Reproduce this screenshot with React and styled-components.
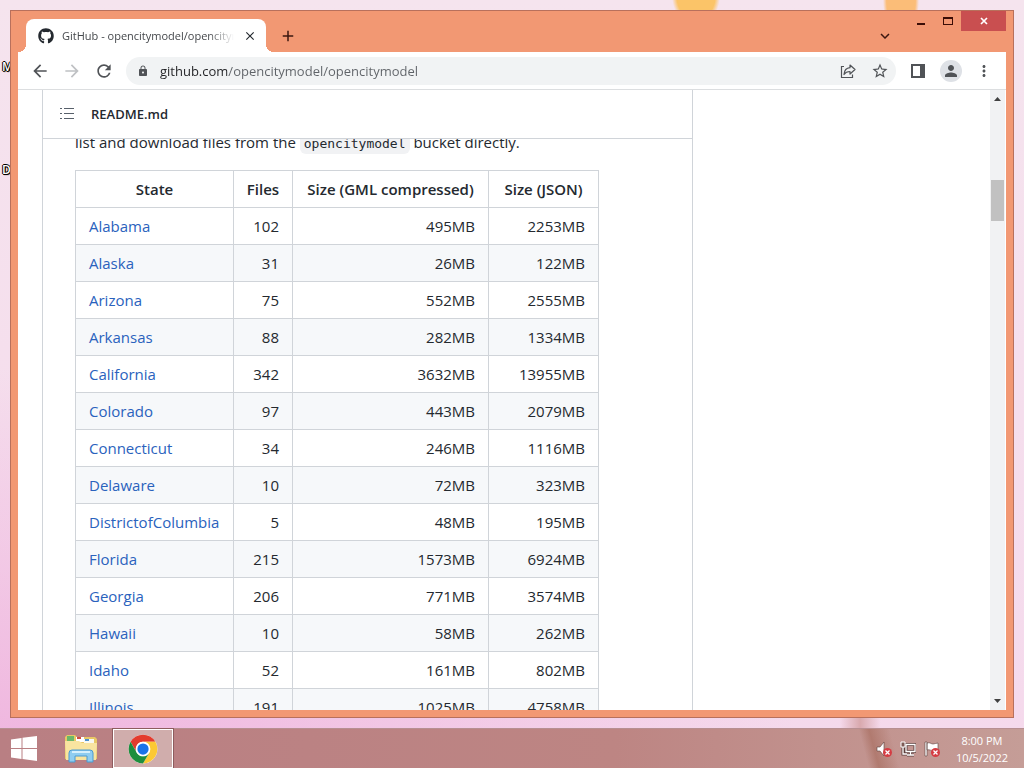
import React from 'react';
import styled, { createGlobalStyle } from 'styled-components';
import {
  MdArrowBack,
  MdArrowForward,
  MdRefresh,
  MdLock,
  MdStarBorder,
  MdPerson,
  MdMoreVert,
  MdKeyboardArrowDown,
  MdAdd,
  MdClose,
} from 'react-icons/md';
import { FaGithub } from 'react-icons/fa';

const GlobalStyle = createGlobalStyle`
  * {
    box-sizing: border-box;
  }

  body {
    margin: 0;
    font-family: 'Open Sans', 'Noto Sans', sans-serif;
  }

  button {
    padding: 0;
    border: 0;
    background: none;
    font: inherit;
    color: inherit;
  }
`;

const Desktop = styled.div`
  position: relative;
  display: flex;
  flex-direction: column;
  height: 100vh;
  overflow: hidden;
  background:
    radial-gradient(ellipse 24px 30px at 696px -4px, #fbc468 80%, transparent),
    radial-gradient(ellipse 18px 40px at 901px 0, #fbbd78 80%, transparent),
    linear-gradient(90deg, transparent 82%, #d9a9ae 84%, transparent 86%) bottom / 100% 50px no-repeat,
    radial-gradient(ellipse 800px 400px at 0 100%, #efb4de, transparent),
    linear-gradient(#f5e4ee, #f5d9ec);
`;

const ShortcutLabel = styled.span`
  position: absolute;
  left: 2px;
  top: ${props => props.$top}px;
  font-size: 12px;
  font-weight: 600;
  line-height: 14px;
  color: #fff;
  text-shadow: 1px 0 #000, -1px 0 #000, 0 1px #000, 0 -1px #000, 1px 1px 1px #000;
`;

const WindowArea = styled.main`
  position: relative;
  display: flex;
  flex: 1;
  min-height: 0;
  padding: 10px;
`;

const Window = styled.section`
  display: flex;
  flex-direction: column;
  flex: 1;
  min-width: 0;
  padding: 0 7px 7px;
  border: 1px solid #b8705c;
  background: #f29873;
`;

const TitleBar = styled.header`
  display: flex;
  flex: none;
  height: 41px;
  padding-left: 8px;
  color: #3c1710;
`;

const Tab = styled.div`
  position: relative;
  display: flex;
  align-items: center;
  align-self: flex-end;
  width: 240px;
  height: 33px;
  padding: 0 8px 0 12px;
  border-radius: 8px 8px 0 0;
  background: #fff;
  color: #24292f;

  &::before,
  &::after {
    content: '';
    position: absolute;
    bottom: 0;
    width: 8px;
    height: 8px;
  }

  &::before {
    right: 100%;
    background: radial-gradient(circle at 0 0, transparent 8px, #fff 8px);
  }

  &::after {
    left: 100%;
    background: radial-gradient(circle at 100% 0, transparent 8px, #fff 8px);
  }
`;

const TabTitle = styled.span`
  flex: 1;
  margin: 0 8px;
  overflow: hidden;
  font-size: 11px;
  white-space: nowrap;
  color: #45484c;
  mask-image: linear-gradient(90deg, #000 85%, transparent);
`;

const IconButton = styled.button`
  display: flex;
  align-items: center;
  justify-content: center;
  flex: none;
  width: ${props => props.$size || 20}px;
  height: ${props => props.$size || 20}px;
  border-radius: 50%;
  background: ${props => props.$background || 'none'};
  color: ${props => props.$color || 'inherit'};
`;

const NewTab = styled(IconButton)`
  margin: 15px 0 0 12px;
`;

const TabSearch = styled(IconButton)`
  margin: 15px 12px 0 auto;
`;

const WindowControls = styled.div`
  display: flex;
  height: 20px;
`;

const WindowControl = styled.button`
  display: flex;
  align-items: center;
  justify-content: center;
  width: ${props => (props.$close ? 45 : 27)}px;
  background: ${props => (props.$close ? '#c94f50' : 'none')};
  color: ${props => (props.$close ? '#fff' : '#3c0d06')};
`;

const Toolbar = styled.nav`
  display: flex;
  align-items: center;
  flex: none;
  gap: 12px;
  height: 38px;
  padding: 0 12px;
  border-bottom: 1px solid #dcdee0;
  background: #fff;
  color: #505357;
`;

const AddressBar = styled.label`
  display: flex;
  align-items: center;
  flex: 1;
  gap: 11px;
  height: 28px;
  padding: 0 6px 0 11px;
  border-radius: 14px;
  background: #f1f3f4;
`;

const Address = styled.input`
  flex: 1;
  min-width: 0;
  padding: 0;
  border: 0;
  outline: 0;
  background: linear-gradient(90deg, #202124 67px, #5f6368 67px);
  background-clip: text;
  -webkit-text-fill-color: transparent;
  font: 13px 'Open Sans', 'Noto Sans', sans-serif;
`;

const Actions = styled.div`
  display: flex;
  align-items: center;
  gap: 12px;
`;

const Viewport = styled.div`
  display: flex;
  flex: 1;
  min-height: 0;
  background: #fff;
`;

const Page = styled.div`
  flex: 1;
  min-width: 0;
  padding-left: 24px;
  overflow: hidden;
`;

const Readme = styled.article`
  display: flex;
  flex-direction: column;
  max-width: 651px;
  height: 100%;
  border: solid #d0d4d9;
  border-width: 0 1px;
  color: #24292f;
`;

const ReadmeHeader = styled.header`
  display: flex;
  align-items: center;
  flex: none;
  gap: 16px;
  height: 49px;
  padding: 0 16px;
  border-bottom: 1px solid #d0d4d9;
  color: #57606a;
`;

const ReadmeTitle = styled.h2`
  margin: 0;
  font-size: 13px;
  font-weight: 600;
  color: #24292f;
`;

const ReadmeBody = styled.div`
  flex: 1;
  min-height: 0;
  padding: 0 32px;
  overflow: hidden;
  font-size: 15px;
  line-height: 24px;
`;

/* Scrolled partly under the sticky header */
const Paragraph = styled.p`
  margin: -9px 0 16px;
  white-space: nowrap;
`;

const Code = styled.code`
  padding: 3px 4px;
  border-radius: 6px;
  background: #f1f2f4;
  font: 13px 'DejaVu Sans Mono', monospace;
`;

const Table = styled.table`
  border-collapse: collapse;
  table-layout: fixed;
  width: 524px;
`;

const Col = styled.col`
  width: ${props => props.$width}px;
`;

const Row = styled.tr`
  height: 37px;
  background: #fff;

  tbody &:nth-child(even) {
    background: #f6f8fa;
  }
`;

const HeadCell = styled.th`
  padding: 6px 0;
  border: 1px solid #d0d4d9;
  font-weight: 600;
  white-space: nowrap;
`;

const Cell = styled.td`
  padding: 6px 13px;
  border: 1px solid #d0d4d9;
  text-align: ${props => props.$align || 'right'};
`;

const StateLink = styled.a`
  color: #2a62bd;
  text-decoration: none;
`;

const Scrollbar = styled.div`
  display: flex;
  flex-direction: column;
  align-items: center;
  flex: none;
  width: 15px;
  margin-right: 1px;
  padding: 7px 0;
  background: #f1f2f3;
  color: #404040;
`;

const ScrollTrack = styled.div`
  display: flex;
  flex: 1;
  flex-direction: column;
  width: 13px;

  &::before {
    content: '';
    flex: 79;
  }

  &::after {
    content: '';
    flex: 478;
  }
`;

const ScrollThumb = styled.div`
  flex: 41;
  background: #c1c1c1;
`;

const Taskbar = styled.footer`
  position: relative;
  display: flex;
  flex: none;
  height: 40px;
  border-top: 1px solid #b78f92;
  background:
    linear-gradient(75deg, transparent 84%, rgba(165, 105, 90, 0.6) 85%, transparent 87%),
    linear-gradient(90deg, #b97f83, #bd8583 60%, #c59d97);
`;

const TaskButton = styled.button`
  display: flex;
  align-items: center;
  justify-content: center;
  width: ${props => props.$width}px;
  border: ${props => (props.$active ? '1px solid #fff' : '0')};
  outline: ${props => (props.$active ? '1px solid #8d5c5e' : '0')};
  background: ${props => (props.$active ? '#d0adac' : 'none')};
`;

const Tray = styled.div`
  display: flex;
  align-items: center;
  gap: 8px;
  margin-left: auto;
  padding-right: 16px;
`;

const Clock = styled.time`
  margin-left: 8px;
  font-size: 11px;
  line-height: 17px;
  text-align: center;
  color: #fff;
`;

const states = [
  { name: 'Alabama', files: 102, gml: '495MB', json: '2253MB' },
  { name: 'Alaska', files: 31, gml: '26MB', json: '122MB' },
  { name: 'Arizona', files: 75, gml: '552MB', json: '2555MB' },
  { name: 'Arkansas', files: 88, gml: '282MB', json: '1334MB' },
  { name: 'California', files: 342, gml: '3632MB', json: '13955MB' },
  { name: 'Colorado', files: 97, gml: '443MB', json: '2079MB' },
  { name: 'Connecticut', files: 34, gml: '246MB', json: '1116MB' },
  { name: 'Delaware', files: 10, gml: '72MB', json: '323MB' },
  { name: 'DistrictofColumbia', files: 5, gml: '48MB', json: '195MB' },
  { name: 'Florida', files: 215, gml: '1573MB', json: '6924MB' },
  { name: 'Georgia', files: 206, gml: '771MB', json: '3574MB' },
  { name: 'Hawaii', files: 10, gml: '58MB', json: '262MB' },
  { name: 'Idaho', files: 52, gml: '161MB', json: '802MB' },
  { name: 'Illinois', files: 191, gml: '1025MB', json: '4758MB' },
];

function ListIcon() {
  return (
    <svg width="16" height="16" viewBox="0 0 16 16" fill="currentColor">
      <path d="M5 2h10v1H5zM5 7h10v1H5zM5 12h10v1H5z" />
      <path d="M1 2h2v1H1zM1 7h2v1H1zM1 12h2v1H1z" />
    </svg>
  );
}

function ShareIcon() {
  return (
    <svg width="16" height="16" viewBox="0 0 16 16" fill="none" stroke="currentColor" strokeWidth="1.2">
      <path d="M4 3.500H1.500v11h11v-3" />
      <path d="M10 2l5 4.500-5 4.500V8.500C7 8.500 5.300 9.500 4 11.500 4.300 7.500 6.500 5 10 4.700z" strokeLinejoin="round" />
    </svg>
  );
}

function SidePanelIcon() {
  return (
    <svg width="16" height="16" viewBox="0 0 16 16">
      <path d="M2 2h12v12H2z" fill="none" stroke="currentColor" strokeWidth="2" />
      <path d="M10 2h4v12h-4z" fill="currentColor" />
    </svg>
  );
}

function WindowsIcon() {
  return (
    <svg width="28" height="26" viewBox="0 0 28 26" fill="#fff">
      <path d="M1 3.500l10.500-1.500v10H1zM12.500 1.800L27 0v12H12.500zM1 13h10.500v10L1 21.500zM12.500 13H27v12l-14.500-1.900z" />
    </svg>
  );
}

function FolderIcon() {
  return (
    <svg width="34" height="30" viewBox="0 0 34 30">
      <path d="M1 3l2-2h8l2 2h18l2 2v20H1z" fill="#e8c766" />
      <path d="M3 2h7v5H3z" fill="#6bb86a" />
      <path d="M12 3h8v5h-8z" fill="#fff" />
      <path d="M13 3h4v2h-4z" fill="#cf4f42" />
      <path d="M20 5h10v4H20z" fill="#f8f8f0" />
      <path d="M21 5h4v2h-4z" fill="#4b90cf" />
      <path d="M1 7h14l3 2h15l-1 17H2z" fill="#f8e4a0" />
      <path d="M5 28V19q0-3 3-3h18q3 0 3 3v9h-6v-6H11v6z" fill="#8fcdf0" stroke="#4b9ad0" />
      <path d="M8 18h18" stroke="#d6f0fc" strokeWidth="2" />
    </svg>
  );
}

function ChromeIcon() {
  return (
    <svg width="30" height="30" viewBox="0 0 48 48">
      <circle cx="24" cy="24" r="23" fill="#fff" />
      <path d="M4.100 12.500A23 23 0 0 1 43.900 12.500H24A11.500 11.500 0 0 0 14 29.800z" fill="#e33b2e" />
      <path d="M43.900 12.500A23 23 0 0 1 24 47L34 29.800A11.500 11.500 0 0 0 24 12.500z" fill="#fcc934" />
      <path d="M24 47A23 23 0 0 1 4.100 12.500L14 29.800A11.500 11.500 0 0 0 34 29.800z" fill="#1e8e3e" />
      <circle cx="24" cy="24" r="11.500" fill="#fff" />
      <circle cx="24" cy="24" r="9" fill="#1a73e8" />
    </svg>
  );
}

function ErrorBadge() {
  return (
    <g>
      <circle cx="11.500" cy="11.500" r="4.500" fill="#d53c43" />
      <path d="M9.500 9.500l4 4M13.500 9.500l-4 4" stroke="#fff" strokeWidth="1.300" />
    </g>
  );
}

function VolumeIcon() {
  return (
    <svg width="16" height="16" viewBox="0 0 16 16">
      <path d="M1 6h3l4-5v14l-4-5H1z" fill="#fff" stroke="#5d3f3c" strokeWidth=".6" />
      <ErrorBadge />
    </svg>
  );
}

function NetworkIcon() {
  return (
    <svg width="16" height="16" viewBox="0 0 16 16" fill="none">
      <path d="M6 3.500h9v7H6zM10.500 10.500v3M7 14h7M3 6v7h4" stroke="#5d3f3c" strokeWidth="3" />
      <path d="M6 3.500h9v7H6zM10.500 10.500v3M7 14h7M3 6v7h4" stroke="#fff" strokeWidth="1.300" />
      <path d="M1 1h4v5H1z" fill="#7d5a55" stroke="#fff" />
    </svg>
  );
}

function FlagIcon() {
  return (
    <svg width="16" height="16" viewBox="0 0 16 16">
      <path d="M1 1h2v14H1zM3 2c3-1 4 1 6 1s3-1 5-1v7c-3 0-3 1-5 1S6 8 3 9z" fill="#fff" stroke="#5d3f3c" strokeWidth=".6" />
      <ErrorBadge />
    </svg>
  );
}

function BrowserTitleBar() {
  return (
    <TitleBar>
      <Tab>
        <FaGithub size={16} />
        <TabTitle>GitHub - opencitymodel/opencitymodel</TabTitle>
        <IconButton $size={16} aria-label="Close tab"><MdClose size={14} /></IconButton>
      </Tab>
      <NewTab aria-label="New tab"><MdAdd size={18} /></NewTab>
      <TabSearch aria-label="Search tabs"><MdKeyboardArrowDown size={18} /></TabSearch>
      <WindowControls>
        <WindowControl aria-label="Minimize">
          <svg width="10" height="10"><path d="M1 7h8v2H1z" fill="currentColor" /></svg>
        </WindowControl>
        <WindowControl aria-label="Maximize">
          <svg width="10" height="10"><path d="M0 1h10v8H0zM1 3v5h8V3z" fill="currentColor" fillRule="evenodd" /></svg>
        </WindowControl>
        <WindowControl $close aria-label="Close">
          <svg width="8" height="8"><path d="M1 1l6 6M7 1L1 7" stroke="currentColor" strokeWidth="1.700" /></svg>
        </WindowControl>
      </WindowControls>
    </TitleBar>
  );
}

function BrowserToolbar() {
  return (
    <Toolbar>
      <IconButton aria-label="Back"><MdArrowBack size={20} /></IconButton>
      <IconButton $color="#bfc1c4" aria-label="Forward"><MdArrowForward size={20} /></IconButton>
      <IconButton aria-label="Reload"><MdRefresh size={20} /></IconButton>
      <AddressBar>
        <MdLock size={12} />
        <Address aria-label="Address" defaultValue="github.com/opencitymodel/opencitymodel" />
        <Actions>
          <IconButton aria-label="Share"><ShareIcon /></IconButton>
          <IconButton aria-label="Bookmark"><MdStarBorder size={18} /></IconButton>
        </Actions>
      </AddressBar>
      <Actions>
        <IconButton aria-label="Side panel"><SidePanelIcon /></IconButton>
        <IconButton $size={22} $background="#dee1e6" aria-label="Profile"><MdPerson size={18} /></IconButton>
        <IconButton aria-label="Menu"><MdMoreVert size={18} /></IconButton>
      </Actions>
    </Toolbar>
  );
}

function StatesTable() {
  return (
    <Table>
      <colgroup>
        <Col $width={158} />
        <Col $width={59} />
        <Col $width={196} />
        <Col $width={110} />
      </colgroup>
      <thead>
        <Row>
          <HeadCell>State</HeadCell>
          <HeadCell>Files</HeadCell>
          <HeadCell>Size (GML compressed)</HeadCell>
          <HeadCell>Size (JSON)</HeadCell>
        </Row>
      </thead>
      <tbody>
        {states.map(state => (
          <Row key={state.name}>
            <Cell $align="left"><StateLink href={`#${state.name}`}>{state.name}</StateLink></Cell>
            <Cell>{state.files}</Cell>
            <Cell>{state.gml}</Cell>
            <Cell>{state.json}</Cell>
          </Row>
        ))}
      </tbody>
    </Table>
  );
}

function App() {
  return (
    <Desktop>
      <GlobalStyle />
      <ShortcutLabel $top={60}>M</ShortcutLabel>
      <ShortcutLabel $top={163}>D</ShortcutLabel>

      <WindowArea>
        <Window>
          <BrowserTitleBar />
          <BrowserToolbar />
          <Viewport>
            <Page>
              <Readme>
                <ReadmeHeader>
                  <ListIcon />
                  <ReadmeTitle>README.md</ReadmeTitle>
                </ReadmeHeader>
                <ReadmeBody>
                  <Paragraph>
                    list and download files from the <Code>opencitymodel</Code> bucket directly.
                  </Paragraph>
                  <StatesTable />
                </ReadmeBody>
              </Readme>
            </Page>
            <Scrollbar>
              <svg width="7" height="4"><path d="M0 4l3.500-4L7 4z" fill="currentColor" /></svg>
              <ScrollTrack><ScrollThumb /></ScrollTrack>
              <svg width="7" height="4"><path d="M0 0l3.500 4L7 0z" fill="currentColor" /></svg>
            </Scrollbar>
          </Viewport>
        </Window>
      </WindowArea>

      <Taskbar>
        <TaskButton $width={48} aria-label="Start"><WindowsIcon /></TaskButton>
        <TaskButton $width={65} aria-label="File Explorer"><FolderIcon /></TaskButton>
        <TaskButton $width={60} $active aria-label="Google Chrome"><ChromeIcon /></TaskButton>
        <Tray>
          <VolumeIcon />
          <NetworkIcon />
          <FlagIcon />
          <Clock>8:00 PM<br />10/5/2022</Clock>
        </Tray>
      </Taskbar>
    </Desktop>
  );
}

export default App;
